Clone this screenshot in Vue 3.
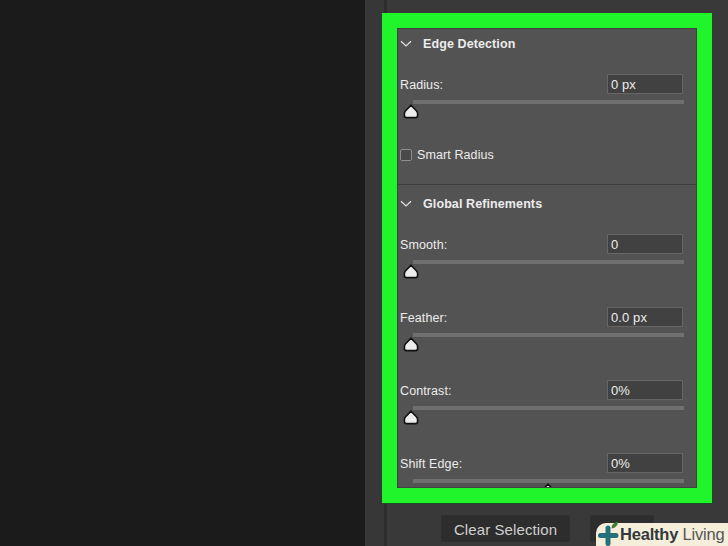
<script setup>
const edgeFields = [{ label: 'Radius:', value: '0 px', pos: 0 }]
const globalFields = [
  { label: 'Smooth:', value: '0', pos: 0 },
  { label: 'Feather:', value: '0.0 px', pos: 0 },
  { label: 'Contrast:', value: '0%', pos: 0 },
  { label: 'Shift Edge:', value: '0%', pos: 137 }
]
</script>

<template>
  <div class="screen">
    <div class="canvas"></div>
    <aside class="side">
      <div class="strip"></div>
      <div class="side-main">
        <div class="frame">
          <div class="panel">
            <section class="edge">
              <h3 class="title">
                <svg class="chevron" width="12" height="8" viewBox="0 0 12 8"><path d="M1 1.2 L6 6 L11 1.2" fill="none" stroke="#e4e4e4" stroke-width="1.2" /></svg>
                Edge Detection
              </h3>
              <div v-for="f in edgeFields" :key="f.label" class="field">
                <div class="field-top">
                  <span class="label">{{ f.label }}</span>
                  <span class="input">{{ f.value }}</span>
                </div>
                <div class="track"></div>
                <svg class="thumb" width="16" height="15" viewBox="0 0 16 15" :style="{ left: f.pos + 'px' }"><path d="M8 1.2 L13.6 7 Q14.6 8.2 14.6 10 L14.6 11.5 Q14.6 13.6 12.5 13.6 L3.5 13.6 Q1.4 13.6 1.4 11.5 L1.4 10 Q1.4 8.2 2.4 7 Z" fill="#ececec" stroke="#111" stroke-width="1.6" /></svg>
              </div>
              <label class="check"><span class="box"></span><span class="label">Smart Radius</span></label>
            </section>
            <section class="global">
              <h3 class="title">
                <svg class="chevron" width="12" height="8" viewBox="0 0 12 8"><path d="M1 1.2 L6 6 L11 1.2" fill="none" stroke="#e4e4e4" stroke-width="1.2" /></svg>
                Global Refinements
              </h3>
              <div v-for="f in globalFields" :key="f.label" class="field">
                <div class="field-top">
                  <span class="label">{{ f.label }}</span>
                  <span class="input">{{ f.value }}</span>
                </div>
                <div class="track"></div>
                <svg class="thumb" width="16" height="15" viewBox="0 0 16 15" :style="{ left: f.pos + 'px' }"><path d="M8 1.2 L13.6 7 Q14.6 8.2 14.6 10 L14.6 11.5 Q14.6 13.6 12.5 13.6 L3.5 13.6 Q1.4 13.6 1.4 11.5 L1.4 10 Q1.4 8.2 2.4 7 Z" fill="#ececec" stroke="#111" stroke-width="1.6" /></svg>
              </div>
            </section>
          </div>
        </div>
        <div class="actions">
          <button class="btn clear">Clear Selection</button>
          <button class="btn other"></button>
        </div>
      </div>
    </aside>
    <div class="badge">
      <svg class="plus" width="24" height="23" viewBox="0 0 24 23">
        <path d="M12 5 V20.5 M4.5 12.5 H20" fill="none" stroke="#26707c" stroke-width="5" stroke-linecap="round" />
        <path d="M15.5 5.5 Q15.5 0 22 -1.5 Q22 4.5 15.5 5.5 Z" fill="#3f7d34" />
      </svg>
      <span class="brand"><b>Healthy</b> Living</span>
    </div>
  </div>
</template>

<style scoped>
.screen {
  position: relative;
  display: flex;
  width: 728px;
  height: 546px;
  overflow: hidden;
  background: #1b1b1b;
  font-family: "Liberation Sans", Arial, sans-serif;
}

.canvas {
  width: 365px;
  flex: none;
  background: #1b1b1b;
}

.side {
  display: flex;
  flex: 1;
}

.strip {
  width: 19px;
  flex: none;
  background: #373737;
  border-right: 3px solid #2d2d2d;
}

.side-main {
  flex: 1;
  background: #393939;
  padding-top: 13px;
}

.frame {
  width: 330px;
  height: 490px;
  box-sizing: border-box;
  margin-left: -5px;
  border: 15px solid #20f52b;
  box-shadow: 1px 1px 0 #1f4a22;
}

.panel {
  height: 100%;
  box-sizing: border-box;
  overflow: hidden;
  background: #535353;
  border: 1px solid #424242;
  color: #ececec;
  font-size: 12.5px;
  letter-spacing: 0.1px;
}

.title {
  display: flex;
  align-items: center;
  margin: 0;
  height: 16px;
  padding-left: 2px;
  font-size: 12.5px;
  font-weight: 700;
}

.chevron {
  margin-right: 11px;
}

.edge {
  height: 156px;
  padding-top: 7px;
  box-sizing: border-box;
  border-bottom: 1px solid #3d3d3d;
}

.global {
  padding-top: 11px;
}

.field {
  position: relative;
  margin-top: 22px;
  height: 51px;
  padding-left: 2px;
}

.global .field {
  margin-top: 0;
  height: 73px;
}

.global .title {
  margin-bottom: 22px;
}

.field-top {
  display: flex;
  align-items: center;
  justify-content: space-between;
  padding-right: 13px;
  height: 20px;
}

.label {
  margin-top: 1px;
}

.input {
  width: 76px;
  height: 20px;
  box-sizing: border-box;
  padding: 1px 0 0 3px;
  line-height: 18px;
  background: #414141;
  border: 1px solid #666;
  font-size: 13px;
}

.track {
  height: 4px;
  margin: 6px 12px 0 13px;
  background: #6f6f6f;
}

.thumb {
  position: absolute;
  top: 30px;
  margin-left: 5px;
}

.check {
  display: flex;
  align-items: center;
  margin-top: 22px;
  padding-left: 2px;
}

.box {
  width: 10px;
  height: 10px;
  margin-right: 5px;
  border: 1px solid #8d8d8d;
  border-radius: 2px;
  background: #4a4a4a;
}

.actions {
  display: flex;
  gap: 20px;
  padding: 12px 0 0 54px;
}

.btn {
  height: 27px;
  border: 1px solid #2f2f2f;
  border-radius: 2px;
  background: #2d2d2d;
  color: #cfcfcf;
  font-family: inherit;
  font-size: 15px;
  letter-spacing: 0.1px;
  padding: 1px 0 0;
}

.clear {
  width: 129px;
}

.other {
  width: 64px;
}

.badge {
  position: absolute;
  right: 0;
  bottom: 0;
  display: flex;
  align-items: center;
  width: 132px;
  height: 23px;
  box-sizing: border-box;
  background: #f5eedb;
  border-top-left-radius: 10px;
}

.plus {
  flex: none;
  overflow: visible;
}

.brand {
  margin-top: -1px;
  color: #555;
  font-size: 16.5px;
  letter-spacing: -0.2px;
  white-space: nowrap;
}

.brand b {
  color: #33383a;
}
</style>
